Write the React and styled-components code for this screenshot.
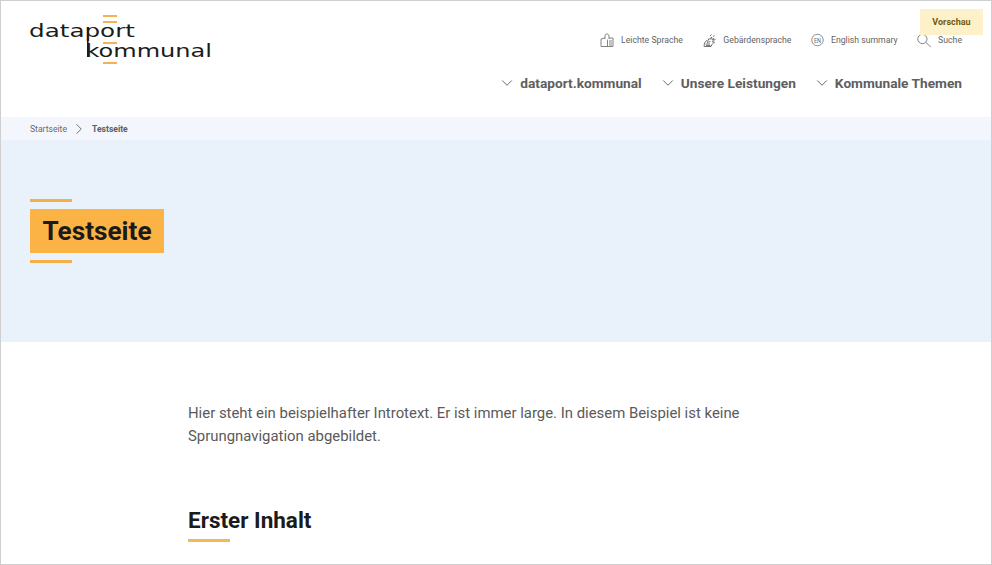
import styled, { createGlobalStyle } from "styled-components";
import { ChevronDown, ChevronRight } from "lucide-react";

const GlobalStyle = createGlobalStyle`
  html, body {
    margin: 0;
    padding: 0;
    background: #fff;
  }
  body {
    font-family: Roboto, "Liberation Sans", sans-serif;
  }
`;

const Page = styled.div`
  position: relative;
  box-sizing: border-box;
  width: 992px;
  height: 565px;
  overflow: hidden;
  border: 1px solid #cfcfcf;
  background: #fff;
`;

const Header = styled.header`
  display: flex;
  justify-content: space-between;
  height: 116px;
  padding: 0 29px 0 28px;
`;

const LogoBox = styled.svg`
  display: block;
  width: 190px;
  height: 60px;
  margin-top: 10px;
`;

const HeaderRight = styled.div`
  display: flex;
  flex-direction: column;
  align-items: flex-end;
`;

const MetaNav = styled.nav`
  display: flex;
  align-items: center;
  gap: 19.5px;
  height: 20px;
  margin-top: 29px;
`;

const MetaLink = styled.a`
  display: flex;
  align-items: center;
  gap: 7px;
  font-size: 8.7px;
  color: #636363;
`;

const MainNav = styled.nav`
  display: flex;
  gap: 17px;
  height: 18px;
  margin-top: 24px;
`;

const MainLink = styled.a`
  display: flex;
  align-items: center;
  gap: 4px;
  font-size: 13.7px;
  font-weight: 700;
  color: #5e5e5e;
`;

const Preview = styled.div`
  position: absolute;
  top: 8px;
  right: 8px;
  display: flex;
  align-items: center;
  justify-content: center;
  width: 63px;
  height: 26px;
  background: #fdf1c9;
  color: #735a10;
  font-size: 9px;
  font-weight: 700;
`;

const Breadcrumb = styled.div`
  display: flex;
  align-items: center;
  gap: 3.5px;
  height: 23px;
  padding-left: 29px;
  background: #f3f6fc;
  font-size: 8.6px;
  color: #6a6a6a;
`;

const Current = styled.span`
  font-weight: 700;
  color: #5e5e5e;
`;

const Hero = styled.section`
  display: flex;
  flex-direction: column;
  align-items: flex-start;
  gap: 7px;
  height: 202px;
  box-sizing: border-box;
  padding: 59px 0 0 29px;
  background: #e9f1fb;
`;

const Rule = styled.div`
  width: 42px;
  height: 3px;
  background: #f5b04a;
`;

const HeroTitle = styled.h1`
  margin: 0;
  padding: 0 12.5px;
  height: 44px;
  line-height: 44px;
  background: #fbb345;
  color: #1a1a1a;
  font-size: 26.2px;
  font-weight: 700;
`;

const Content = styled.main`
  padding: 60px 0 0 187px;
  width: 570px;
`;

const Intro = styled.p`
  margin: 0;
  font-size: 14.9px;
  line-height: 23px;
  color: #5a5a5a;
`;

const SectionTitle = styled.h2`
  margin: 57px 0 0;
  font-size: 22.5px;
  line-height: 30px;
  font-weight: 700;
  color: #1b1b1b;
`;

const SectionRule = styled(Rule)`
  margin-top: 4px;
  height: 2.5px;
  background: #f5b858;
`;

function Logo() {
  return (
    <LogoBox viewBox="0 0 190 60">
      <g fill="#f0b356">
        <rect x="74" y="4" width="14" height="2" />
        <rect x="74" y="10" width="14" height="2" />
        <rect x="74" y="31" width="14" height="2" />
        <rect x="74" y="51" width="14" height="2" />
      </g>
      <rect x="58" y="16" width="1.6" height="30" fill="#1b1b1b" />
      <text x="0" y="26" textLength="106" lengthAdjust="spacingAndGlyphs" fontFamily="DejaVu Sans" fontSize="18" fill="#1b1b1b">
        dataport
      </text>
      <text x="56.5" y="46" textLength="126.5" lengthAdjust="spacingAndGlyphs" fontFamily="DejaVu Sans" fontSize="18" fill="#1b1b1b">
        kommunal
      </text>
    </LogoBox>
  );
}

function BookIcon() {
  return (
    <svg width="14" height="15" viewBox="0 0 14 15" fill="none" stroke="#666" strokeWidth="0.8">
      <path d="M5 5 L1 6 V13.5 H13 V5 H9" />
      <path d="M5 6 V3 C5 1.5 6 1 7 1 C8 1 9 1.8 9 3 V6" />
      <path d="M7.5 6.5 V13.5" />
      <path d="M9 8 H12 M9 10 H12 M9 12 H12" />
    </svg>
  );
}

function HandsIcon() {
  return (
    <svg width="14" height="15" viewBox="0 0 14 15" fill="none" stroke="#666" strokeWidth="0.9">
      <path d="M2 13.5 L2.5 10 L4.5 7.5 L5.5 8.5 L7 5.5 L8 6.5 L9.5 4 L10 6.5 L12 5.5 L10.5 9 L12.5 9 L10 11.5 L9 13.5 Z" />
      <path d="M3.5 11 H8 M5 9.5 L8.5 8.5 M4 12.5 H8.5" />
      <path d="M8 3 L9.5 1.5 M11 3.5 L12.5 2.5 M12 7 L13.5 6.5" />
    </svg>
  );
}

function EnIcon() {
  return (
    <svg width="13" height="14" viewBox="0 0 14 14" fill="none" stroke="#666" strokeWidth="0.8">
      <circle cx="7" cy="7" r="6.2" />
      <text x="3.2" y="10" fontFamily="Roboto" fontSize="8.5" textLength="7.6" lengthAdjust="spacingAndGlyphs" fill="#666" stroke="none">
        EN
      </text>
    </svg>
  );
}

function SearchIcon() {
  return (
    <svg width="14" height="15" viewBox="0 0 14 15" fill="none" stroke="#666" strokeWidth="0.8">
      <circle cx="5.4" cy="6" r="4.6" />
      <path d="M8.8 9.4 L13.8 14" />
    </svg>
  );
}

export default function App() {
  return (
    <>
      <GlobalStyle />
      <Page>
        <Header>
          <Logo />
          <HeaderRight>
            <MetaNav>
              <MetaLink>
                <BookIcon />
                Leichte Sprache
              </MetaLink>
              <MetaLink>
                <HandsIcon />
                Gebärdensprache
              </MetaLink>
              <MetaLink>
                <EnIcon />
                English summary
              </MetaLink>
              <MetaLink>
                <SearchIcon />
                Suche
              </MetaLink>
            </MetaNav>
            <MainNav>
              <MainLink>
                <ChevronDown size={18} strokeWidth={1.3} color="#666" />
                dataport.kommunal
              </MainLink>
              <MainLink>
                <ChevronDown size={18} strokeWidth={1.3} color="#666" />
                Unsere Leistungen
              </MainLink>
              <MainLink>
                <ChevronDown size={18} strokeWidth={1.3} color="#666" />
                Kommunale Themen
              </MainLink>
            </MainNav>
          </HeaderRight>
        </Header>
        <Preview>Vorschau</Preview>
        <Breadcrumb>
          <span>Startseite</span>
          <ChevronRight size={18} strokeWidth={1.2} color="#666" />
          <Current>Testseite</Current>
        </Breadcrumb>
        <Hero>
          <Rule />
          <HeroTitle>Testseite</HeroTitle>
          <Rule />
        </Hero>
        <Content>
          <Intro>
            Hier steht ein beispielhafter Introtext. Er ist immer large. In diesem Beispiel ist keine Sprungnavigation
            abgebildet.
          </Intro>
          <SectionTitle>Erster Inhalt</SectionTitle>
          <SectionRule />
        </Content>
      </Page>
    </>
  );
}
